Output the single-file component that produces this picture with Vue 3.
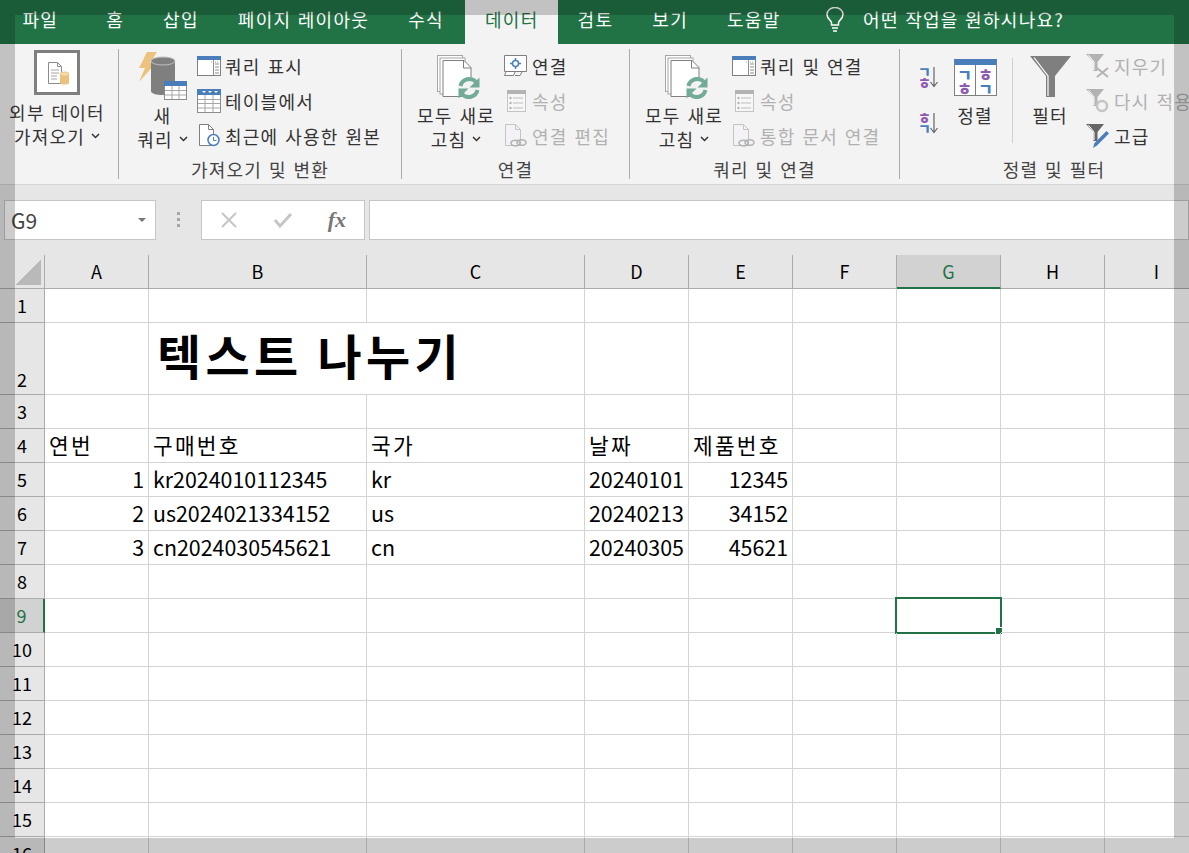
<script setup>
const tabs = ['파일', '홈', '삽입', '페이지 레이아웃', '수식', '데이터', '검토', '보기', '도움말']
const columns = ['A', 'B', 'C', 'D', 'E', 'F', 'G', 'H', 'I']

const rowData = {
  4: { A: '연번', B: '구매번호', C: '국가', D: '날짜', E: '제품번호' },
  5: { A: 1, B: 'kr2024010112345', C: 'kr', D: '20240101', E: 12345 },
  6: { A: 2, B: 'us2024021334152', C: 'us', D: '20240213', E: 34152 },
  7: { A: 3, B: 'cn2024030545621', C: 'cn', D: '20240305', E: 45621 }
}
const rows = Array.from({ length: 16 }, (_, i) => i + 1)

const cellText = (row, col) => (rowData[row] ? rowData[row][col] ?? '' : '')
const isNumber = (row, col) => typeof cellText(row, col) === 'number'

const connectGroups = [
  {
    name: 'conn',
    label: '연결',
    first: { icon: '#i-link', text: '연결' },
    second: '속성',
    third: '연결 편집'
  },
  {
    name: 'query',
    label: '쿼리 및 연결',
    first: { icon: '#i-query', text: '쿼리 및 연결' },
    second: '속성',
    third: '통합 문서 연결'
  }
]
</script>

<template>
  <div class="page">
    <!-- shared icon shapes -->
    <svg class="defs" width="0" height="0">
      <symbol id="i-query" viewBox="0 0 24 20">
        <rect x="0.5" y="0.5" width="23" height="19" fill="#fff" stroke="#7f7f7f" />
        <rect x="0" y="0" width="24" height="4" fill="#4a7ebb" />
        <path d="M16.5 4v15M18 8h4M18 11h4M18 14h4M18 17h4" stroke="#8c8c8c" fill="none" />
        <path d="M14 6h1M16 6h1M18 6h1M20 6h1" stroke="#a6a6a6" />
      </symbol>
      <symbol id="i-link" viewBox="0 0 24 22">
        <path d="M0.5 0.5h22v16h-22zM2 17l-1.5 3.5h9l1.5-3.5M11 20.5h5l2-3.5" fill="#fff" stroke="#7f7f7f" />
        <path d="M11.5 3v11M6 8.5h11" stroke="#4a7ebb" stroke-width="1.5" />
        <circle cx="11.5" cy="8.5" r="3" fill="#fff" stroke="#4a7ebb" stroke-width="1.5" />
      </symbol>
      <symbol id="i-props" viewBox="0 0 19 22">
        <rect x="0.5" y="0.5" width="18" height="21" fill="#f7f7f7" stroke="#c4c4c4" />
        <rect x="0" y="0" width="19" height="4" fill="#b3b3b3" />
        <path d="M6 8h10M6 13h10M6 18h10" stroke="#bdbdbd" />
        <circle cx="3.5" cy="8" r="1.2" fill="#b3b3b3" />
        <circle cx="3.5" cy="13" r="1.2" fill="#b3b3b3" />
        <circle cx="3.5" cy="18" r="1.2" fill="#b3b3b3" />
      </symbol>
      <symbol id="i-editlink" viewBox="0 0 22 23">
        <path d="M0.5 0.5h10l5 5v16h-15z" fill="#f5f2f7" stroke="#c4c4c4" />
        <path d="M10.5 0.5v5h5" fill="none" stroke="#c4c4c4" />
        <ellipse cx="10.5" cy="19" rx="4.5" ry="2.8" fill="#f3f3f3" stroke="#b3b3b3" stroke-width="1.6" />
        <ellipse cx="16.5" cy="18.5" rx="4.5" ry="2.8" fill="none" stroke="#b3b3b3" stroke-width="1.6" />
      </symbol>
      <symbol id="i-refresh" viewBox="0 0 44 44">
        <rect x="0.5" y="0.5" width="25" height="36" fill="#fff" stroke="#a6a6a6" />
        <rect x="3" y="3" width="25" height="36" fill="#fff" stroke="#a6a6a6" />
        <path d="M6 5.5h21l7 7v29h-28z" fill="#fff" stroke="#7f7f7f" />
        <path d="M26.5 5.5v7.5h7.5" fill="none" stroke="#7f7f7f" />
        <circle cx="32" cy="33" r="11" fill="#f3f3f3" />
        <path d="M23.5 31a9 9 0 0 1 15.5-4" fill="none" stroke="#72ab97" stroke-width="4" />
        <path d="M40.5 35a9 9 0 0 1-15.5 4" fill="none" stroke="#72ab97" stroke-width="4" />
        <path d="M42.5 22.5v10h-10z" fill="#72ab97" />
        <path d="M21.5 43.5v-10h10z" fill="#72ab97" />
      </symbol>
      <symbol id="i-funnel" viewBox="0 0 18 17">
        <path d="M0 0h18l-6.5 8v9h-4v-9z" fill="currentColor" />
        <path d="M2.5 1.2l5.5 6.8v8" fill="none" stroke="#fff" />
      </symbol>
      <symbol id="i-chev" viewBox="0 0 9 6">
        <path d="M1 1l3.5 3.5L8 1" fill="none" stroke="#333" stroke-width="1.5" />
      </symbol>
    </svg>

    <div class="tabbar">
      <div
        v-for="tab in tabs"
        :key="tab"
        class="tab"
        :class="{ active: tab === '데이터', first: tab === '파일' }"
      >
        {{ tab }}
      </div>
      <div class="tellme">
        <svg width="20" height="25" viewBox="0 0 20 25" fill="none" stroke="#fff" stroke-width="1.5">
          <path d="M6.5 18v-2.5c0-2-4.5-3.5-4.5-8a8 7 0 0 1 16 0c0 4.5-4.5 6-4.5 8V18z" />
          <path d="M7 21h6M8 24h4" />
        </svg>
        <span>어떤 작업을 원하시나요?</span>
      </div>
    </div>

    <div class="ribbon">
      <section class="group g-data">
        <div class="group-body">
          <div class="big ext">
            <div class="big-icon">
              <svg width="46" height="45" viewBox="0 0 46 45">
                <rect x="1.5" y="1.5" width="43" height="42" fill="#fff" stroke="#7f7f7f" stroke-width="3" />
                <path d="M14.5 12.5h9l4 4v17h-13z" fill="#fff" stroke="#8c8c8c" />
                <path d="M23.5 12.5v4h4" fill="none" stroke="#8c8c8c" />
                <path d="M17 20h8M17 23h8M17 26h6M17 29h6" stroke="#a6a6a6" />
                <path d="M26 24.5v8a4.5 2 0 0 0 9 0v-8z" fill="#eac27f" />
                <ellipse cx="30.5" cy="24" rx="4.5" ry="2" fill="#f4dcae" stroke="#eac27f" />
              </svg>
            </div>
            <div class="big-text">외부 데이터</div>
            <div class="big-text">가져오기<svg class="chev"><use href="#i-chev" /></svg></div>
          </div>
        </div>
        <div class="group-label"></div>
      </section>

      <section class="group g-get">
        <div class="group-body">
          <div class="big newq">
            <div class="big-icon">
              <svg width="50" height="50" viewBox="0 0 50 50">
                <path d="M9 1L1 17h6L1 31l17-19h-6l7-11z" fill="#edc27c" />
                <path d="M13 10v30c0 2.5 5 4 12 4s12-1.5 12-4V10z" fill="#7f7f7f" />
                <ellipse cx="25" cy="10" rx="12" ry="4" fill="#7f7f7f" stroke="#bfbfbf" />
                <rect x="26.5" y="30.5" width="22" height="18" fill="#fff" stroke="#8c8c8c" />
                <rect x="26" y="30" width="23" height="5" fill="#4a7ebb" />
                <path d="M34 35v13M41 35v13M27 39.5h21M27 44h21" stroke="#a6a6a6" />
              </svg>
            </div>
            <div class="big-text">새</div>
            <div class="big-text">쿼리<svg class="chev"><use href="#i-chev" /></svg></div>
          </div>
          <div class="smalls">
            <div class="small">
              <span class="slot"><svg width="24" height="20"><use href="#i-query" /></svg></span>
              쿼리 표시
            </div>
            <div class="small">
              <span class="slot">
                <svg width="24" height="24" viewBox="0 0 24 24">
                  <rect x="0.5" y="0.5" width="23" height="23" fill="#fff" stroke="#8c8c8c" />
                  <rect x="0" y="0" width="24" height="6" fill="#4a7ebb" />
                  <path d="M5 2l2 2 2-2zM11 2l2 2 2-2zM17 2l2 2 2-2z" fill="#fff" />
                  <path d="M8 6v17M16 6v17M1 10.5h22M1 14.5h22M1 19h22" stroke="#a6a6a6" />
                </svg>
              </span>
              테이블에서
            </div>
            <div class="small">
              <span class="slot">
                <svg width="22" height="23" viewBox="0 0 22 23">
                  <path d="M1.5 0.5h9l5 5v16h-14z" fill="#fff" stroke="#7f7f7f" />
                  <path d="M10.5 0.5v5h5" fill="none" stroke="#7f7f7f" />
                  <circle cx="15.5" cy="16" r="5.5" fill="#fff" stroke="#4a7ebb" stroke-width="1.5" />
                  <path d="M15.5 13v3.5h3" fill="none" stroke="#4a7ebb" />
                </svg>
              </span>
              최근에 사용한 원본
            </div>
          </div>
        </div>
        <div class="group-label">가져오기 및 변환</div>
      </section>

      <section v-for="g in connectGroups" :key="g.name" class="group" :class="'g-' + g.name">
        <div class="group-body">
          <div class="big refresh">
            <div class="big-icon">
              <svg class="refresh-icon" width="44" height="44"><use href="#i-refresh" /></svg>
            </div>
            <div class="big-text">모두 새로</div>
            <div class="big-text">고침<svg class="chev"><use href="#i-chev" /></svg></div>
          </div>
          <div class="smalls">
            <div class="small">
              <span class="slot"><svg width="24" height="22"><use :href="g.first.icon" /></svg></span>
              {{ g.first.text }}
            </div>
            <div class="small dim">
              <span class="slot"><svg width="19" height="22"><use href="#i-props" /></svg></span>
              {{ g.second }}
            </div>
            <div class="small dim">
              <span class="slot"><svg width="22" height="23"><use href="#i-editlink" /></svg></span>
              {{ g.third }}
            </div>
          </div>
        </div>
        <div class="group-label">{{ g.label }}</div>
      </section>

      <section class="group g-sort">
        <div class="group-body">
          <div class="sort-pair">
            <div class="sort-mini">
              <span class="jamo"><b class="blue">ㄱ</b><b class="purple">ㅎ</b></span>
              <svg width="8" height="21" viewBox="0 0 8 21"><path d="M4 0v19M0.5 15l3.5 4.5L7.5 15" fill="none" stroke="#666" stroke-width="1.2" /></svg>
            </div>
            <div class="sort-mini">
              <span class="jamo"><b class="purple">ㅎ</b><b class="blue">ㄱ</b></span>
              <svg width="8" height="21" viewBox="0 0 8 21"><path d="M4 0v19M0.5 15l3.5 4.5L7.5 15" fill="none" stroke="#666" stroke-width="1.2" /></svg>
            </div>
          </div>
          <div class="big sortbtn">
            <div class="big-icon">
              <div class="sort-table">
                <div class="sort-col"><b class="blue">ㄱ</b><b class="purple">ㅎ</b></div>
                <div class="sort-col"><b class="purple">ㅎ</b><b class="blue">ㄱ</b></div>
              </div>
            </div>
            <div class="big-text">정렬</div>
          </div>
          <div class="vsep"></div>
          <div class="big filterbtn">
            <div class="big-icon">
              <svg width="41" height="41" viewBox="0 0 41 41">
                <path d="M0 0h41L25 20v21h-9V20z" fill="#7f7f7f" />
                <path d="M4 1.5L18 20v20" fill="none" stroke="#fff" stroke-width="1.2" />
              </svg>
            </div>
            <div class="big-text">필터</div>
          </div>
          <div class="smalls filter-smalls">
            <div class="small dim">
              <span class="slot">
                <svg width="24" height="24" viewBox="0 0 24 24" class="f-dim">
                  <use href="#i-funnel" width="18" height="17" />
                  <path d="M11 14l11 9M22 14l-11 9" stroke="#b3b3b3" stroke-width="2" />
                </svg>
              </span>
              지우기
            </div>
            <div class="small dim">
              <span class="slot">
                <svg width="24" height="24" viewBox="0 0 24 24" class="f-dim">
                  <use href="#i-funnel" width="18" height="17" />
                  <circle cx="16" cy="17" r="5" fill="none" stroke="#c4c4c4" stroke-width="2.5" />
                </svg>
              </span>
              다시 적용
            </div>
            <div class="small">
              <span class="slot">
                <svg width="24" height="24" viewBox="0 0 24 24" class="f-on">
                  <use href="#i-funnel" width="18" height="17" />
                  <path d="M7 24l1.5-5 12-12 2.5 2.5-12 12z" fill="#4a7ebb" />
                </svg>
              </span>
              고급
            </div>
          </div>
        </div>
        <div class="group-label">정렬 및 필터</div>
      </section>
    </div>

    <div class="formula-bar">
      <div class="name-box">
        <span>G9</span>
        <i class="caret"></i>
      </div>
      <div class="grip"><i></i><i></i><i></i></div>
      <div class="fx-box">
        <svg width="20" height="20" viewBox="0 0 20 20"><path d="M3 3l14 14M17 3L3 17" stroke="#c6c6c6" stroke-width="2" /></svg>
        <svg width="20" height="20" viewBox="0 0 20 20"><path d="M2 10l5 6L18 4" fill="none" stroke="#c6c6c6" stroke-width="3" /></svg>
        <span class="fx">fx</span>
      </div>
      <div class="formula-input"></div>
    </div>

    <div class="sheet">
      <div class="corner"><i></i></div>
      <div v-for="col in columns" :key="col" class="col-head" :class="{ sel: col === 'G' }">{{ col }}</div>
      <template v-for="row in rows" :key="row">
        <div class="row-head" :class="{ sel: row === 9, tall: row === 2 }">{{ row }}</div>
        <template v-if="row === 2">
          <div class="cell"></div>
          <div class="cell title">텍스트 나누기</div>
          <div v-for="col in columns.slice(3)" :key="col" class="cell"></div>
        </template>
        <template v-else>
          <div
            v-for="col in columns"
            :key="col"
            class="cell"
            :class="{ num: isNumber(row, col), hangul: row === 4 }"
          >
            {{ cellText(row, col) }}
            <div v-if="row === 9 && col === 'G'" class="selection"><i></i></div>
          </div>
        </template>
      </template>
    </div>

    <!-- dimmed frame laid over the whole capture -->
    <div class="frame"></div>
  </div>
</template>

<style>
html,
body {
  margin: 0;
  overflow: hidden;
}
</style>

<style scoped>
.page {
  position: relative;
  width: 1189px;
  height: 853px;
  overflow: hidden;
  background: #fff;
  font-family: "Noto Sans CJK KR", "Noto Sans", sans-serif;
  color: #333;
}

.defs {
  position: absolute;
}

.tabbar {
  display: flex;
  align-items: stretch;
  height: 44px;
  padding-left: 3px;
  background: #217346;
  color: #fff;
  font-size: 18px;
  letter-spacing: 1.3px;
  word-spacing: 1px;
}

.tab {
  display: flex;
  align-items: center;
  justify-content: center;
  padding: 0 19.5px 6px;
  white-space: nowrap;
}

.tab.first {
  margin-right: 9px;
}

.tab.active {
  margin: 0 0 0 2px;
  background: #f3f3f3;
  color: #217346;
}

.tellme {
  display: flex;
  align-items: center;
  gap: 18px;
  margin-left: 25px;
  padding-bottom: 6px;
  font-size: 18px;
}

.ribbon {
  display: flex;
  width: 1300px;
  height: 135px;
  padding-top: 5px;
  border-bottom: 1px solid #d4d4d4;
  background: #f3f3f3;
  font-size: 18px;
  letter-spacing: 1.25px;
  word-spacing: 1.5px;
}

.group {
  display: flex;
  flex-direction: column;
  height: 130px;
  box-sizing: border-box;
  border-right: 1px solid #ababab;
  flex: none;
}

.g-data { width: 119px; }
.g-get { width: 283px; }
.g-conn { width: 228px; }
.g-query { width: 270px; }
.g-sort { width: 308px; border-right: none; }

.group-body {
  display: flex;
  flex: 1;
  min-height: 0;
}

.group-label {
  height: 24px;
  line-height: 29px;
  text-align: center;
  color: #444;
  white-space: nowrap;
}

.g-get .group-body { padding-left: 16px; }
.g-conn .group-body,
.g-query .group-body { padding-left: 13px; }
.g-sort .group-body { padding-left: 18px; }

.big {
  display: flex;
  flex-direction: column;
  align-items: center;
  flex: none;
}

.big-icon {
  display: flex;
  align-items: center;
  justify-content: center;
  height: 54px;
  width: 100%;
}

.big-text {
  display: flex;
  align-items: center;
  height: 24px;
  white-space: nowrap;
}

.chev {
  width: 9px;
  height: 6px;
  margin-left: 6px;
}

.ext {
  width: 114px;
}

.ext .big-icon {
  height: 51px;
  align-items: flex-start;
  padding-top: 1px;
  box-sizing: border-box;
}

.newq { width: 55px; }
.refresh { width: 82px; }

.refresh-icon {
  margin-left: 6px;
  margin-top: 2px;
}

.smalls {
  display: flex;
  flex-direction: column;
  margin: -1px 0 0 7px;
}

.small {
  display: flex;
  align-items: center;
  gap: 4px;
  height: 35px;
  white-space: nowrap;
}

.slot {
  display: flex;
  align-items: center;
  justify-content: center;
  width: 24px;
  flex: none;
}

.dim {
  color: #b1b1b1;
}

.sort-pair {
  display: flex;
  flex-direction: column;
  width: 20px;
  padding-top: 17px;
  gap: 24px;
}

.sort-mini {
  display: flex;
  align-items: center;
  height: 22px;
}

.jamo {
  display: flex;
  flex-direction: column;
  width: 12px;
  font-size: 14px;
  line-height: 11px;
  letter-spacing: 0;
}

.jamo b,
.sort-col b {
  font-weight: 900;
}

.blue { color: #4a7ebb; }
.purple { color: #8e5bb0; }

.sortbtn {
  width: 50px;
  margin-left: 12px;
}

.sort-table {
  display: flex;
  width: 43px;
  height: 37px;
  margin-top: 2px;
  box-sizing: border-box;
  border: 1px solid #7f7f7f;
  border-top: 6px solid #4a7ebb;
  background: #fff;
}

.sort-col {
  display: flex;
  flex-direction: column;
  align-items: center;
  flex: 1;
  font-size: 16px;
  line-height: 14px;
  letter-spacing: 0;
  padding-top: 2px;
}

.sort-col + .sort-col {
  border-left: 1px solid #7f7f7f;
}

.vsep {
  width: 1px;
  height: 85px;
  margin: 9px 0 0 12px;
  background: #d0d0d0;
}

.filterbtn {
  width: 50px;
  margin-left: 12px;
}

.filter-smalls {
  margin-left: 11px;
}

.f-dim { color: #b3b3b3; }
.f-on { color: #666; }

.formula-bar {
  display: flex;
  align-items: flex-start;
  height: 70px;
  padding: 15px 0 0 4px;
  box-sizing: border-box;
  background: #e6e6e6;
}

.name-box {
  display: flex;
  align-items: center;
  justify-content: space-between;
  width: 152px;
  height: 40px;
  padding: 0 9px 0 6px;
  box-sizing: border-box;
  border: 1px solid #c6c6c6;
  background: #fff;
  font-size: 21px;
  color: #444;
}

.caret {
  width: 0;
  height: 0;
  border-left: 4px solid transparent;
  border-right: 4px solid transparent;
  border-top: 4px solid #777;
}

.grip {
  display: flex;
  flex-direction: column;
  align-items: center;
  gap: 3px;
  width: 45px;
  height: 40px;
  padding-top: 12px;
  box-sizing: border-box;
}

.grip i {
  width: 3px;
  height: 3px;
  background: #a6a6a6;
}

.fx-box {
  display: flex;
  align-items: center;
  justify-content: space-between;
  width: 164px;
  height: 40px;
  padding: 0 18px 0 17px;
  box-sizing: border-box;
  border: 1px solid #c6c6c6;
  background: #fff;
}

.fx {
  font-family: "Liberation Serif", serif;
  font-style: italic;
  font-weight: 700;
  font-size: 22px;
  color: #777;
}

.formula-input {
  flex: 1;
  height: 40px;
  margin-left: 4px;
  box-sizing: border-box;
  border: 1px solid #c6c6c6;
  background: #fff;
}

.sheet {
  display: grid;
  grid-template-columns: 45px 104px 218px 218px repeat(6, 104px);
  grid-template-rows: 34px 34px 72px repeat(14, 34px);
  color: #000;
  font-size: 21.4px;
}

.corner {
  position: relative;
  box-sizing: border-box;
  background: #e6e6e6;
  border-right: 1px solid #ababab;
  border-bottom: 1px solid #ababab;
}

.corner i {
  position: absolute;
  right: 3px;
  bottom: 3px;
  width: 26px;
  height: 26px;
  background: linear-gradient(135deg, transparent 50%, #b9b9b9 50%);
}

.col-head,
.row-head {
  display: flex;
  align-items: center;
  justify-content: center;
  padding-bottom: 1px;
  box-sizing: border-box;
  background: #e6e6e6;
  font-size: 18px;
  border-right: 1px solid #ababab;
  border-bottom: 1px solid #ababab;
}

.row-head.tall {
  align-items: flex-end;
  padding-bottom: 2px;
}

.col-head.sel {
  background: #d2d2d2;
  color: #217346;
  border-bottom: 2px solid #217346;
}

.row-head.sel {
  background: #d2d2d2;
  color: #217346;
  border-right: 2px solid #217346;
}

.cell {
  position: relative;
  display: flex;
  align-items: center;
  padding: 0 4px 2px;
  box-sizing: border-box;
  border-right: 1px solid #d4d4d4;
  border-bottom: 1px solid #d4d4d4;
  white-space: nowrap;
  min-width: 0;
}

.cell.num {
  justify-content: flex-end;
}

.cell.hangul {
  letter-spacing: 2.2px;
}

.cell.title {
  grid-column: span 2;
  padding: 0 0 10px 8px;
  font-size: 48px;
  font-weight: 700;
  letter-spacing: 4.3px;
}

.selection {
  position: absolute;
  inset: -2px;
  border: 2px solid #217346;
  pointer-events: none;
}

.selection i {
  position: absolute;
  right: -2px;
  bottom: -2px;
  width: 6px;
  height: 6px;
  background: #217346;
  border-left: 1px solid #fff;
  border-top: 1px solid #fff;
}

.frame {
  position: absolute;
  inset: 0;
  box-sizing: border-box;
  border: 15px solid rgba(0, 0, 0, 0.2);
  pointer-events: none;
}
</style>
